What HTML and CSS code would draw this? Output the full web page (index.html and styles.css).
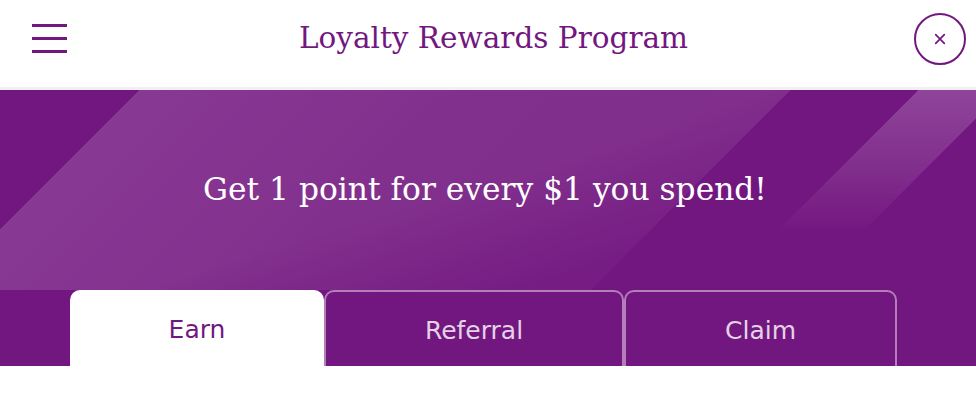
FILE: index.html
```html
<!DOCTYPE html>
<html lang="en">
<head>
<meta charset="utf-8">
<title>Loyalty Rewards Program</title>
<link rel="stylesheet" href="styles.css">
</head>
<body>
<header class="topbar">
  <button class="menu" aria-label="Menu"><span></span><span></span><span></span></button>
  <h1 class="title">Loyalty Rewards Program</h1>
  <button class="close" aria-label="Close">
    <svg width="14" height="14" viewBox="0 0 14 14"><path d="M2 2 L12 12 M12 2 L2 12" stroke="#731780" stroke-width="2" stroke-linecap="round" fill="none"/></svg>
  </button>
</header>
<section class="hero">
  <h2 class="hero-text">Get 1 point for every $1 you spend!</h2>
</section>
<nav class="tabs">
  <div class="tab tab-earn active">Earn</div>
  <div class="tab tab-referral">Referral</div>
  <div class="tab tab-claim">Claim</div>
</nav>
</body>
</html>
```
FILE: styles.css
```css
html, body {
  margin: 0;
  padding: 0;
  background: #ffffff;
}

.topbar {
  box-sizing: border-box;
  height: 90px;
  padding: 0 10px 10px 32px;
  display: flex;
  align-items: center;
  justify-content: space-between;
  background: #ffffff;
  border-bottom: 3px solid #f0f0f0;
}

.menu {
  width: 35px;
  height: 29px;
  padding: 0;
  border: 0;
  background: transparent;
  display: flex;
  flex-direction: column;
  justify-content: space-between;
}

.menu span {
  display: block;
  width: 35px;
  height: 3px;
  background: #731780;
}

.title {
  margin: 0 0 0 6px;
  font-family: "DejaVu Serif", "Liberation Serif", serif;
  font-weight: normal;
  font-size: 29.5px;
  line-height: 1;
  color: #731780;
}

.close {
  box-sizing: border-box;
  width: 52px;
  height: 52px;
  padding: 0;
  border: 2px solid #731780;
  border-radius: 50%;
  background: #ffffff;
  display: flex;
  align-items: center;
  justify-content: center;
}

.close svg {
  display: block;
  width: 12px;
  height: 12px;
}

.hero {
  position: relative;
  height: 200px;
  display: flex;
  align-items: center;
  justify-content: center;
  background-color: #731780;
  overflow: hidden;
}

/* decorative diagonal light bands behind the headline */
.hero::before {
  content: "";
  position: absolute;
  inset: 0;
  background-image: linear-gradient(135deg,
    transparent 11.9%,
    rgba(255, 255, 255, 0.15) 11.9%,
    rgba(255, 255, 255, 0.11) 40%,
    rgba(255, 255, 255, 0.10) 67.2%,
    transparent 67.2%);
  -webkit-mask-image: linear-gradient(162.5deg, #000 0%, #000 48%, rgba(0,0,0,0.25) 72%, rgba(0,0,0,0.1) 100%);
  mask-image: linear-gradient(162.5deg, #000 0%, #000 48%, rgba(0,0,0,0.25) 72%, rgba(0,0,0,0.1) 100%);
}

.hero::after {
  content: "";
  position: absolute;
  inset: 0;
  background-image: linear-gradient(135deg,
    transparent 78.1%,
    rgba(255, 255, 255, 0.2) 78.1%,
    rgba(255, 255, 255, 0.2) 85.4%,
    transparent 85.4%);
  -webkit-mask-image: linear-gradient(to bottom, #000 0%, rgba(0,0,0,0.5) 40%, transparent 72%);
  mask-image: linear-gradient(to bottom, #000 0%, rgba(0,0,0,0.5) 40%, transparent 72%);
}

.hero-text {
  position: relative;
  z-index: 1;
  margin: 0 0 0 -6px;
  font-family: "DejaVu Serif", "Liberation Serif", serif;
  font-weight: normal;
  font-size: 31.3px;
  line-height: 1;
  color: #ffffff;
}

.tabs {
  height: 76px;
  box-sizing: border-box;
  padding-left: 70px;
  display: flex;
  align-items: flex-end;
  background: #731780;
}

.tab {
  box-sizing: border-box;
  height: 76px;
  display: flex;
  align-items: center;
  justify-content: center;
  border: 2px solid rgba(255, 255, 255, 0.45);
  border-bottom: 0;
  border-radius: 10px 10px 0 0;
  font-family: "DejaVu Sans", "Open Sans", sans-serif;
  font-size: 25px;
  color: rgba(255, 255, 255, 0.82);
  padding-top: 2px;
}

.tab.active {
  background: #ffffff;
  border-color: #ffffff;
  color: #731780;
  padding-top: 0;
}

.tab-earn { width: 254px; }
.tab-referral { width: 300px; }
.tab-claim { width: 273px; }
```
